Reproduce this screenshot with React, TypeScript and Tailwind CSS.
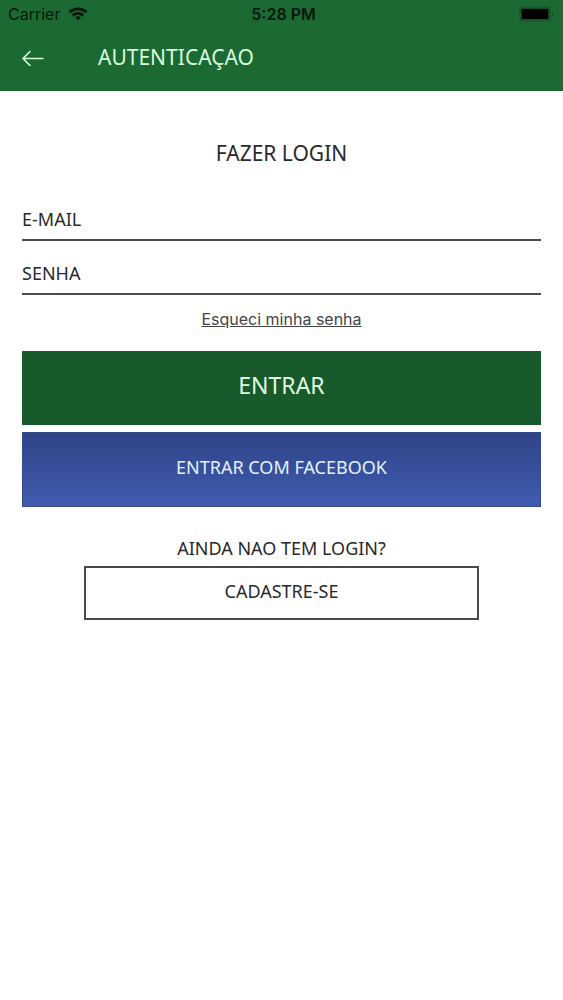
function WifiIcon() {
  return (
    <svg width="20" height="14" viewBox="0 0 20 14" fill="none" stroke="#03170a" strokeWidth="2.8" aria-hidden="true">
      <path d="M1.4 5.1C6.2.7 13.8.7 18.6 5.1" />
      <path d="M4.7 8.4c3-2.7 7.6-2.7 10.600 0" />
      <path d="M10 13.200 7.100 10.300c1.700-1.500 4.100-1.500 5.800 0Z" fill="#03170a" stroke="none" />
    </svg>
  );
}

function BatteryIcon() {
  return (
    <svg width="36" height="16" viewBox="0 0 36 16" aria-hidden="true">
      <rect x="1" y="1" width="30" height="14" rx="3" fill="none" stroke="#124f25" strokeWidth="1.2" />
      <rect x="2.5" y="2.8" width="27" height="10.4" rx="1" fill="#000" />
      <path d="M33 5.5c1.600.6 1.600 4.400 0 5Z" fill="#124f25" />
    </svg>
  );
}

function BackArrow() {
  return (
    <svg width="22" height="16" viewBox="0 0 22 16" fill="none" stroke="#d9fbdc" strokeWidth="1.6" strokeLinecap="round" strokeLinejoin="round" aria-hidden="true">
      <path d="M21 8.500H1M8 1.500 1 8.500l7 7" />
    </svg>
  );
}

function Field({ id, label, type }: { id: string; label: string; type: string }) {
  return (
    <div className="flex h-[54px] items-center gap-3 border-b-2 border-[#4a4a4d] pt-3">
      <label htmlFor={id} className="text-lg">{label}</label>
      <input id={id} type={type} className="min-w-0 flex-1 bg-transparent text-lg outline-none" />
    </div>
  );
}

export default function App() {
  return (
    <div className="min-h-screen bg-white font-['Noto_Sans',sans-serif] text-[#29292c]">
      <header className="bg-[#1b6a34] text-[#d9fbdc]">
        <div className="grid h-7 grid-cols-3 items-center pl-2 pr-1 font-[Inter,sans-serif] text-base text-[#03170a]">
          <div className="flex items-center gap-2">
            <span>Carrier</span>
            <WifiIcon />
          </div>
          <span className="text-center font-semibold">5:28 PM</span>
          <div className="flex justify-end pr-1">
            <BatteryIcon />
          </div>
        </div>
        <div className="flex h-[63px] items-center gap-[54px] px-[22px] pb-1">
          <button type="button" aria-label="Voltar">
            <BackArrow />
          </button>
          <h1 className="text-[21px]">AUTENTICAÇAO</h1>
        </div>
      </header>

      <main className="px-[22px] pt-12">
        <h2 className="text-center text-[21px] leading-7">FAZER LOGIN</h2>
        <form className="flex flex-col pt-5">
          <Field id="email" label="E-MAIL" type="email" />
          <Field id="senha" label="SENHA" type="password" />
          <a href="#senha" className="mt-3 self-center font-[Inter,sans-serif] text-base text-[#444448] underline">
            Esqueci minha senha
          </a>
          <button type="submit" className="mt-5 h-[74px] bg-[#185a2c] pb-1.5 text-[23px] text-[#e0fbe0]">
            ENTRAR
          </button>
          <button type="button" className="mt-[7px] h-[75px] border border-[#374a87] bg-linear-to-b from-[#2e4488] to-[#415cb0] pb-1.5 text-lg text-[#e3f1ff]">
            ENTRAR COM FACEBOOK
          </button>
        </form>
        <p className="pt-[27px] text-center text-lg">AINDA NAO TEM LOGIN?</p>
        <div className="mt-1 px-[12%]">
          <button type="button" className="h-[54px] w-full border-2 border-[#4a4a4d] pb-1 text-lg">
            CADASTRE-SE
          </button>
        </div>
      </main>
    </div>
  );
}
